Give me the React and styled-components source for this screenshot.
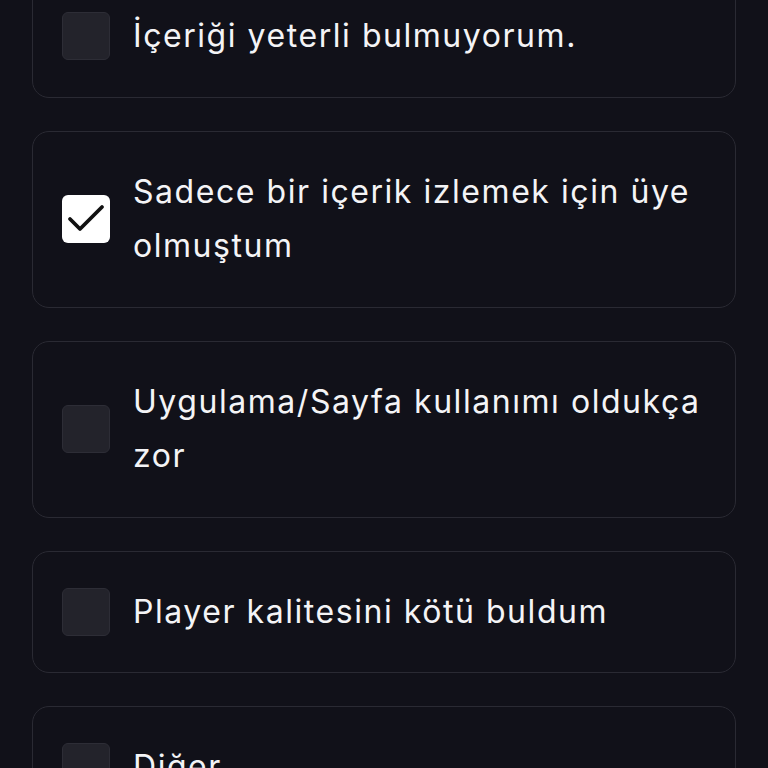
import React, { useState } from "react";
import styled, { createGlobalStyle } from "styled-components";

const Global = createGlobalStyle`
  html, body {
    margin: 0;
    padding: 0;
    background: #111119;
    overflow: hidden;
  }
  body {
    font-family: Inter, "Noto Sans", "Liberation Sans", sans-serif;
  }
`;

const Page = styled.div`
  min-height: 768px;
  background: #111119;
  padding: 0 32px;
  box-sizing: border-box;
`;

const List = styled.div`
  display: flex;
  flex-direction: column;
  gap: 33px;
  margin-top: -25px;
`;

const Card = styled.label`
  display: flex;
  align-items: center;
  gap: 23px;
  box-sizing: border-box;
  width: 704px;
  padding: 33px 28px 33px 29px;
  border: 1px solid #2a2a33;
  border-radius: 17px;
  background: #111119;
  cursor: pointer;
`;

const Box = styled.span`
  flex: 0 0 48px;
  width: 48px;
  height: 48px;
  box-sizing: border-box;
  border-radius: 6px;
  display: flex;
  align-items: center;
  justify-content: center;
  background: ${(p) => (p.$checked ? "#ffffff" : "#23232b")};
  border: ${(p) => (p.$checked ? "none" : "1.5px solid #2d2d36")};
`;

const Label = styled.span`
  color: #f4f4f6;
  font-size: 32px;
  line-height: 54.5px;
  font-weight: 400;
  letter-spacing: 1.55px;
`;

const CheckIcon = () => (
  <svg width="48" height="48" viewBox="0 0 24 24" fill="none" stroke="#111111" strokeWidth="1.9" strokeLinecap="round" strokeLinejoin="round">
    <path d="M20 6 9 17l-5-5" />
  </svg>
);

const options = [
  "İçeriği yeterli bulmuyorum.",
  "Sadece bir içerik izlemek için üye olmuştum",
  "Uygulama/Sayfa kullanımı oldukça zor",
  "Player kalitesini kötü buldum",
  "Diğer",
];

export default function App() {
  const [checked, setChecked] = useState([1]);
  const toggle = (i) =>
    setChecked((c) => (c.includes(i) ? c.filter((x) => x !== i) : [...c, i]));
  return (
    <Page>
      <Global />
      <List>
        {options.map((o, i) => (
          <Card key={i} onClick={() => toggle(i)}>
            <Box $checked={checked.includes(i)}>
              {checked.includes(i) && <CheckIcon />}
            </Box>
            <Label>{o}</Label>
          </Card>
        ))}
      </List>
    </Page>
  );
}
